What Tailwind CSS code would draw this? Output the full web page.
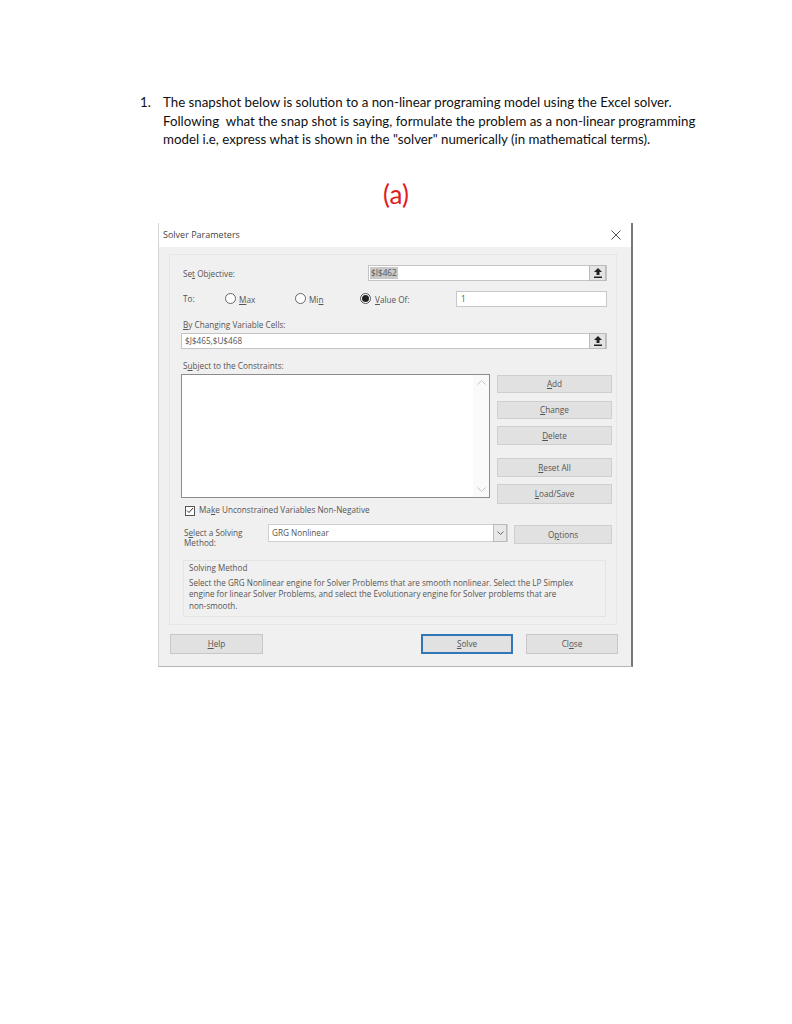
<!DOCTYPE html>
<html lang="en">
<head>
  <meta charset="UTF-8">
  <title>Solver Parameters</title>
  <script src="https://cdn.jsdelivr.net/npm/@tailwindcss/browser@4"></script>
</head>
<body class="bg-white w-[792px] h-[1024px] overflow-hidden">
  <!-- Question -->
  <div class="flex pt-[93px] pl-[140px] font-['Lato',sans-serif] text-[13.3px] leading-[18.5px] text-[#111]">
    <div class="w-[23px]">1.</div>
    <p class="w-[560px]">The snapshot below is solution to a non-linear programing model using the Excel solver.<br>Following&nbsp; what the snap shot is saying, formulate the problem as a non-linear programming<br>model i.e, express what is shown in the "solver" numerically (in mathematical terms).</p>
  </div>
  <div class="mt-[25px] mb-[8px] h-[41px] text-center font-['Lato',sans-serif] text-[#e01b1b] text-[26px] leading-[41px]">(a)</div>

  <!-- Dialog -->
  <div class="ml-[158px] w-[475px] h-[444px] bg-[#f0f0f0] border-l border-b border-r-2 border-l-[#d4d4d4] border-b-[#b5b5b5] border-r-[#777] font-['Open_Sans',sans-serif] text-[8.2px] text-[#555]">
    <div class="h-[24px] bg-white flex items-center justify-between pl-[4px] pr-[10px] text-[9px] text-[#444]">
      <span class="pt-[1px]">Solver Parameters</span>
      <svg width="10" height="10" viewBox="0 0 10 10" stroke="#555" fill="none"><path d="M.5.5l9 9M9.5.5l-9 9"/></svg>
    </div>
    <div class="pt-[7px] pl-[10px]">
      <div class="w-[448px] h-[371px] border border-[#e6e6e6] pl-[11px] pt-[10px]">
        <!-- objective -->
        <div class="flex h-[16px] items-center">
          <div class="w-[187px] pl-[2px] pt-[3px]">Se<span class="underline">t</span> Objective:</div>
          <div class="w-[239px] h-[16px] bg-white border border-[#c4c4c4] flex items-center justify-between pl-[1px]">
            <span class="bg-[#c9c9c9] px-[1px] leading-[12px]">$I$462</span>
            <div class="w-[17px] h-[16px] bg-[#e4e4e4] border border-[#bbb] flex items-center justify-center">
              <svg width="8" height="10" viewBox="0 0 8 10" fill="#222"><path d="M4 0L8 4H5.5V7h-3V4H0zM0 8.5h8V10H0z"/></svg>
            </div>
          </div>
        </div>
        <!-- to -->
        <div class="flex h-[16px] items-center mt-[10px]">
          <div class="w-[44px] pl-[2px] pt-[2px]">To:</div>
          <div class="w-[70px] flex items-center gap-[3px]">
            <span class="w-[11px] h-[11px] rounded-full bg-white border border-[#666]"></span><span class="pt-[3px]"><span class="underline">M</span>ax</span>
          </div>
          <div class="w-[65px] flex items-center gap-[3px]">
            <span class="w-[11px] h-[11px] rounded-full bg-white border border-[#666]"></span><span class="pt-[3px]">Mi<span class="underline">n</span></span>
          </div>
          <div class="w-[96px] flex items-center gap-[4px]">
            <span class="w-[11px] h-[11px] rounded-full bg-white border border-[#555] flex items-center justify-center"><span class="w-[7px] h-[7px] rounded-full bg-[#222]"></span></span><span class="pt-[3px]"><span class="underline">V</span>alue Of:</span>
          </div>
          <div class="w-[151px] h-[16px] bg-white border border-[#c8c8c8] pl-[4px] leading-[13px]">1</div>
        </div>
        <!-- changing cells -->
        <div class="mt-[11px] h-[15px] pl-[2px] leading-[14px]"><span class="underline">B</span>y Changing Variable Cells:</div>
        <div class="w-[426px] h-[16px] bg-white border border-[#c4c4c4] flex items-center justify-between pl-[3px]">
          <span class="pt-[1px]">$J$465,$U$468</span>
          <div class="w-[17px] h-[16px] bg-[#e4e4e4] border border-[#bbb] flex items-center justify-center">
            <svg width="8" height="10" viewBox="0 0 8 10" fill="#222"><path d="M4 0L8 4H5.5V7h-3V4H0zM0 8.5h8V10H0z"/></svg>
          </div>
        </div>
        <!-- constraints -->
        <div class="mt-[10px] h-[15px] pl-[2px] leading-[13px]">S<span class="underline">u</span>bject to the Constraints:</div>
        <div class="flex h-[124px]">
          <div class="w-[309px] h-[124px] bg-white border border-[#8c8c8c] flex justify-end">
            <div class="w-[16px] flex flex-col justify-between items-center py-[5px] bg-[#fafafa]">
              <svg width="9" height="5" viewBox="0 0 9 5" fill="none" stroke="#c4c4c4"><path d="M.5 4.5l4-4 4 4"/></svg>
              <svg width="9" height="5" viewBox="0 0 9 5" fill="none" stroke="#c4c4c4"><path d="M.5.5l4 4 4-4"/></svg>
            </div>
          </div>
          <div class="ml-[7px] w-[115px] pt-[1px] flex flex-col shrink-0">
            <button class="h-[18px] shrink-0 pt-[2px] bg-[#e1e1e1] border border-[#cfcfcf] text-center"><span class="underline">A</span>dd</button>
            <button class="mt-[8px] h-[18px] shrink-0 pt-[2px] bg-[#e1e1e1] border border-[#cfcfcf] text-center"><span class="underline">C</span>hange</button>
            <button class="mt-[7px] h-[19px] shrink-0 pt-[2px] bg-[#e1e1e1] border border-[#cfcfcf] text-center"><span class="underline">D</span>elete</button>
            <button class="mt-[13px] h-[19px] shrink-0 pt-[2px] bg-[#e1e1e1] border border-[#cfcfcf] text-center"><span class="underline">R</span>eset All</button>
            <button class="mt-[7px] h-[20px] shrink-0 pt-[2px] bg-[#e1e1e1] border border-[#cfcfcf] text-center"><span class="underline">L</span>oad/Save</button>
          </div>
        </div>
        <!-- checkbox -->
        <div class="mt-[8px] h-[10px] pl-[4px] flex items-center gap-[4px]">
          <span class="w-[10px] h-[10px] border border-[#555] bg-white flex items-center justify-center">
            <svg width="8" height="7" viewBox="0 0 8 7" fill="none" stroke="#333"><path d="M1 3.5l2 2L7 1"/></svg>
          </span>
          <span>Ma<span class="underline">k</span>e Unconstrained Variables Non-Negative</span>
        </div>
        <!-- method -->
        <div class="mt-[8px] h-[20px] flex items-start">
          <div class="w-[87px] pl-[3px] leading-[10.5px] pt-[4px]">S<span class="underline">e</span>lect a Solving<br>Method:</div>
          <div class="w-[240px] h-[18px] bg-white border border-[#d0d0d0] flex items-center justify-between pl-[3px]">
            <span class="pt-[2px]">GRG Nonlinear</span>
            <div class="w-[14px] h-[18px] bg-[#e8e8e8] border border-[#bbb] flex items-center justify-center">
              <svg width="7" height="4" viewBox="0 0 7 4" fill="none" stroke="#666"><path d="M.5.5l3 3 3-3"/></svg>
            </div>
          </div>
          <button class="ml-[6px] mt-[1px] w-[98px] h-[19px] pt-[2px] bg-[#e1e1e1] border border-[#cfcfcf] text-center">O<span class="underline">p</span>tions</button>
        </div>
        <!-- description -->
        <div class="mt-[16px] ml-[2px] w-[423px] h-[57px] border border-[#e4e4e4] pl-[5px] pt-[1px] leading-[11.5px] text-[8.1px]">
          <div class="h-[15px]">Solving Method</div>
          <p class="whitespace-nowrap">Select the GRG Nonlinear engine for Solver Problems that are smooth nonlinear. Select the LP Simplex<br>engine for linear Solver Problems, and select the Evolutionary engine for Solver problems that are<br>non-smooth.</p>
        </div>
      </div>
      <!-- footer buttons -->
      <div class="mt-[9px] flex pl-[1px]">
        <button class="w-[93px] h-[20px] pt-[2px] bg-[#e1e1e1] border border-[#c8c8c8] text-center"><span class="underline">H</span>elp</button>
        <button class="ml-[158px] w-[92px] h-[20px] pt-[2px] bg-[#e1e1e1] border-2 border-[#2f77b5] text-center"><span class="underline">S</span>olve</button>
        <button class="ml-[13px] w-[92px] h-[20px] pt-[2px] bg-[#e1e1e1] border border-[#c8c8c8] text-center">Cl<span class="underline">o</span>se</button>
      </div>
    </div>
  </div>
</body>
</html>
